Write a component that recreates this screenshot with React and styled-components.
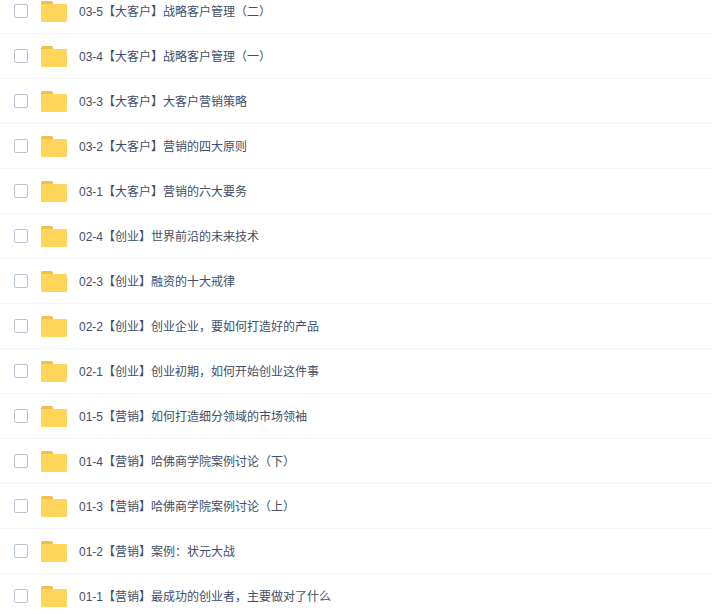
import React from 'react';
import styled, { createGlobalStyle } from 'styled-components';

const GlobalStyle = createGlobalStyle`
  html, body {
    margin: 0;
    padding: 0;
    background: #fff;
    height: 100%;
    overflow: hidden;
  }
`;

const FileList = styled.ul`
  list-style: none;
  margin: -11px 0 0;
  padding: 0;
  font-family: "Liberation Sans", "Noto Sans CJK SC", sans-serif;
  font-size: 12px;
  color: #424e67;
`;

const Row = styled.li`
  display: flex;
  align-items: center;
  height: 44px;
  border-bottom: 1px solid #f4f6fa;
  padding-left: 14px;
`;

const Checkbox = styled.span`
  width: 14px;
  height: 14px;
  box-sizing: border-box;
  flex: none;
  border: 1px solid #b8c4d4;
  border-radius: 2px;
  background: #fff;
  margin-right: 13px;
`;

const FolderSvg = styled.svg`
  flex: none;
  width: 26px;
  height: 21px;
  margin-right: 12px;
`;

const Name = styled.span`
  line-height: 20px;
  padding-top: 2px;
  white-space: nowrap;
`;

const Folder = () => (
  <FolderSvg viewBox="0 0 26 21">
    <path d="M0 2 Q0 0 2 0 H10 Q12 0 12 2 V4 H0 Z" fill="#f1bd4f" />
    <path d="M0 4 Q0 3 1 3 H25 Q26 3 26 4 V20 Q26 21 25 21 H1 Q0 21 0 20 Z" fill="#ffd659" />
  </FolderSvg>
);

const items = [
  '03-5【大客户】战略客户管理（二）',
  '03-4【大客户】战略客户管理（一）',
  '03-3【大客户】大客户营销策略',
  '03-2【大客户】营销的四大原则',
  '03-1【大客户】营销的六大要务',
  '02-4【创业】世界前沿的未来技术',
  '02-3【创业】融资的十大戒律',
  '02-2【创业】创业企业，要如何打造好的产品',
  '02-1【创业】创业初期，如何开始创业这件事',
  '01-5【营销】如何打造细分领域的市场领袖',
  '01-4【营销】哈佛商学院案例讨论（下）',
  '01-3【营销】哈佛商学院案例讨论（上）',
  '01-2【营销】案例：状元大战',
  '01-1【营销】最成功的创业者，主要做对了什么',
];

export default function App() {
  return (
    <>
      <GlobalStyle />
      <FileList>
        {items.map((name) => (
          <Row key={name}>
            <Checkbox />
            <Folder />
            <Name>{name}</Name>
          </Row>
        ))}
      </FileList>
    </>
  );
}
